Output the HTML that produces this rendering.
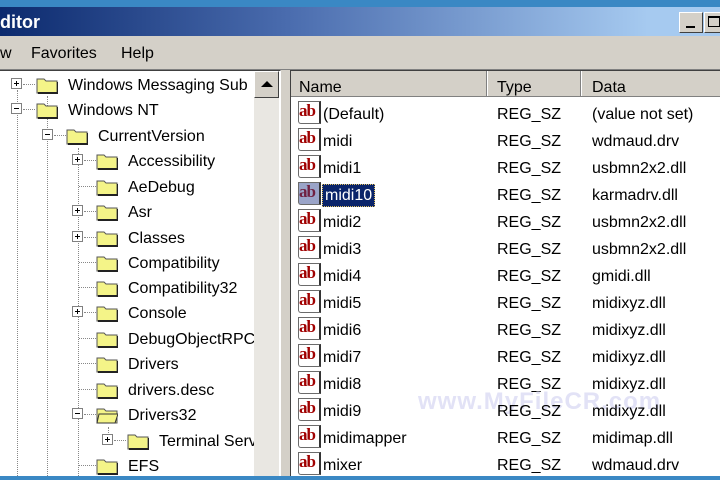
<!DOCTYPE html>
<html><head><style>
*{margin:0;padding:0;box-sizing:border-box}
body{width:720px;height:480px;overflow:hidden;background:#d4d0c8;font-family:"Liberation Sans",sans-serif;font-size:16px;color:#000;position:relative}
.a{position:absolute}
.tt{white-space:nowrap;line-height:20px;margin-top:2px}
.box{position:absolute;width:11px;height:11px;border:1px solid #808080;background:#fff}
.box:before{content:"";position:absolute;left:2px;top:4px;width:5px;height:1px;background:#000}
.box.p:after{content:"";position:absolute;left:4px;top:2px;width:1px;height:5px;background:#000}
.hd{position:absolute;border-top:1px dotted #888;height:0}
.vd{position:absolute;border-left:1px dotted #888;width:0}
.fd{position:absolute;width:22px;height:19px}
.ic{position:absolute;width:23px;height:23px;border:1px solid #6b6b6b;border-right:2px solid #333;background:#fff;border-radius:0 0 0 3px}
.ic span{position:absolute;left:0px;top:1px;font-family:"Liberation Serif",serif;font-weight:bold;font-size:17px;color:#a00000;line-height:16px;letter-spacing:-1px}
</style></head><body>
<div class="a" style="left:0;top:0;width:720px;height:7px;background:#3a88c4"></div>
<div class="a" style="left:0;top:7px;width:720px;height:29px;background:linear-gradient(90deg,#0c2a6e 0%,#4a6cae 40%,#a6caf0 90%,#a6caf0 100%)"></div>
<div class="a tt" style="left:0;top:10px;color:#fff;font-weight:bold;font-size:18px">ditor</div>
<div class="a" style="left:679px;top:12px;width:24px;height:21px;background:#d4d0c8;border:1px solid;border-color:#fff #404040 #404040 #fff"><div class="a" style="left:6px;top:13px;width:9px;height:2px;background:#000"></div></div>
<div class="a" style="left:704px;top:12px;width:20px;height:21px;background:#d4d0c8;border:1px solid;border-color:#fff #404040 #404040 #fff"><div class="a" style="left:3px;top:3px;width:12px;height:11px;border:1px solid #000;border-top-width:2px"></div></div>
<div class="a tt" style="left:0;top:42px">w</div>
<div class="a tt" style="left:31px;top:42px">Favorites</div>
<div class="a tt" style="left:121px;top:42px">Help</div>
<div class="a" style="left:0;top:69px;width:720px;height:1px;background:#808080"></div>
<div class="a" style="left:0;top:70px;width:281px;height:410px;background:#fff;border-top:1px solid #404040;border-right:1px solid #fff;overflow:hidden">
<div class="a" style="left:254px;top:0;width:25px;height:410px;background-color:#f0efeb;background-image:radial-gradient(#d4d0c8 0.7px,transparent 0.7px);background-size:2px 2px"></div>
<div class="a" style="left:254px;top:0;width:25px;height:27px;background:#d4d0c8;border:1px solid;border-color:#fff #404040 #404040 #fff"><div class="a" style="left:6px;top:9px;width:0;height:0;border-left:6px solid transparent;border-right:6px solid transparent;border-bottom:6px solid #000"></div></div>
</div>
<div class="a" style="left:281px;top:70px;width:9px;height:410px;background:#d4d0c8"></div>
<div class="vd" style="left:17px;top:90px;height:390px"></div>
<div class="vd" style="left:47px;top:96px;height:384px"></div>
<div class="vd" style="left:78px;top:148px;height:332px"></div>
<div class="vd" style="left:108px;top:427px;height:12px"></div>
<div class="a" style="left:290px;top:70px;width:430px;height:410px;background:#fff;border-top:1px solid #404040;border-left:1px solid #404040"></div>
<div class="a" style="left:291px;top:71px;width:429px;height:26px;background:#d4d0c8;border-bottom:1px solid #808080"></div>
<div class="a" style="left:486px;top:71px;width:1px;height:25px;background:#808080"></div><div class="a" style="left:487px;top:71px;width:1px;height:25px;background:#fff"></div>
<div class="a" style="left:580px;top:71px;width:1px;height:25px;background:#808080"></div><div class="a" style="left:581px;top:71px;width:1px;height:25px;background:#fff"></div>
<div class="a tt" style="left:299px;top:76px">Name</div>
<div class="a tt" style="left:497px;top:76px">Type</div>
<div class="a tt" style="left:592px;top:76px">Data</div>

<div class="box p" style="left:11px;top:78px"></div><div class="hd" style="left:23px;top:84px;width:12px"></div>
<svg class="fd" style="left:36px;top:75px"><path d="M1 4h7l2 2h11v12H1z" fill="#f4f488" stroke="#555"/><path d="M2 18h20V7" fill="none" stroke="#222" stroke-width="2"/></svg>
<div class="a tt" style="left:68px;top:74px">Windows Messaging Sub</div>

<div class="box" style="left:11px;top:103px"></div><div class="hd" style="left:23px;top:109px;width:12px"></div>
<svg class="fd" style="left:36px;top:100px"><path d="M1 4h7l2 2h11v12H1z" fill="#f4f488" stroke="#555"/><path d="M2 18h20V7" fill="none" stroke="#222" stroke-width="2"/></svg>
<div class="a tt" style="left:68px;top:99px">Windows NT</div>

<div class="box" style="left:42px;top:129px"></div><div class="hd" style="left:54px;top:135px;width:12px"></div>
<svg class="fd" style="left:66px;top:126px"><path d="M1 4h7l2 2h11v12H1z" fill="#f4f488" stroke="#555"/><path d="M2 18h20V7" fill="none" stroke="#222" stroke-width="2"/></svg>
<div class="a tt" style="left:98px;top:125px">CurrentVersion</div>

<div class="box p" style="left:72px;top:154px"></div><div class="hd" style="left:84px;top:160px;width:12px"></div>
<svg class="fd" style="left:96px;top:151px"><path d="M1 4h7l2 2h11v12H1z" fill="#f4f488" stroke="#555"/><path d="M2 18h20V7" fill="none" stroke="#222" stroke-width="2"/></svg>
<div class="a tt" style="left:128px;top:150px">Accessibility</div>

<div class="hd" style="left:79px;top:186px;width:17px"></div>
<svg class="fd" style="left:96px;top:177px"><path d="M1 4h7l2 2h11v12H1z" fill="#f4f488" stroke="#555"/><path d="M2 18h20V7" fill="none" stroke="#222" stroke-width="2"/></svg>
<div class="a tt" style="left:128px;top:176px">AeDebug</div>

<div class="box p" style="left:72px;top:205px"></div><div class="hd" style="left:84px;top:211px;width:12px"></div>
<svg class="fd" style="left:96px;top:202px"><path d="M1 4h7l2 2h11v12H1z" fill="#f4f488" stroke="#555"/><path d="M2 18h20V7" fill="none" stroke="#222" stroke-width="2"/></svg>
<div class="a tt" style="left:128px;top:201px">Asr</div>

<div class="box p" style="left:72px;top:231px"></div><div class="hd" style="left:84px;top:237px;width:12px"></div>
<svg class="fd" style="left:96px;top:228px"><path d="M1 4h7l2 2h11v12H1z" fill="#f4f488" stroke="#555"/><path d="M2 18h20V7" fill="none" stroke="#222" stroke-width="2"/></svg>
<div class="a tt" style="left:128px;top:227px">Classes</div>

<div class="hd" style="left:79px;top:262px;width:17px"></div>
<svg class="fd" style="left:96px;top:253px"><path d="M1 4h7l2 2h11v12H1z" fill="#f4f488" stroke="#555"/><path d="M2 18h20V7" fill="none" stroke="#222" stroke-width="2"/></svg>
<div class="a tt" style="left:128px;top:252px">Compatibility</div>

<div class="hd" style="left:79px;top:287px;width:17px"></div>
<svg class="fd" style="left:96px;top:278px"><path d="M1 4h7l2 2h11v12H1z" fill="#f4f488" stroke="#555"/><path d="M2 18h20V7" fill="none" stroke="#222" stroke-width="2"/></svg>
<div class="a tt" style="left:128px;top:277px">Compatibility32</div>

<div class="box p" style="left:72px;top:306px"></div><div class="hd" style="left:84px;top:312px;width:12px"></div>
<svg class="fd" style="left:96px;top:303px"><path d="M1 4h7l2 2h11v12H1z" fill="#f4f488" stroke="#555"/><path d="M2 18h20V7" fill="none" stroke="#222" stroke-width="2"/></svg>
<div class="a tt" style="left:128px;top:302px">Console</div>

<div class="hd" style="left:79px;top:338px;width:17px"></div>
<svg class="fd" style="left:96px;top:329px"><path d="M1 4h7l2 2h11v12H1z" fill="#f4f488" stroke="#555"/><path d="M2 18h20V7" fill="none" stroke="#222" stroke-width="2"/></svg>
<div class="a tt" style="left:128px;top:328px;width:126px;overflow:hidden">DebugObjectRPC</div>

<div class="hd" style="left:79px;top:363px;width:17px"></div>
<svg class="fd" style="left:96px;top:354px"><path d="M1 4h7l2 2h11v12H1z" fill="#f4f488" stroke="#555"/><path d="M2 18h20V7" fill="none" stroke="#222" stroke-width="2"/></svg>
<div class="a tt" style="left:128px;top:353px">Drivers</div>

<div class="hd" style="left:79px;top:389px;width:17px"></div>
<svg class="fd" style="left:96px;top:380px"><path d="M1 4h7l2 2h11v12H1z" fill="#f4f488" stroke="#555"/><path d="M2 18h20V7" fill="none" stroke="#222" stroke-width="2"/></svg>
<div class="a tt" style="left:128px;top:379px">drivers.desc</div>

<div class="box" style="left:72px;top:408px"></div><div class="hd" style="left:84px;top:414px;width:12px"></div>
<svg class="fd" style="left:96px;top:405px"><path d="M1 4h7l2 2h11v12H1z" fill="#f4f488" stroke="#555"/><path d="M3 9h19l-3 9H1z" fill="#f4f488" stroke="#333"/></svg>
<div class="a tt" style="left:128px;top:404px">Drivers32</div>

<div class="box p" style="left:102px;top:434px"></div><div class="hd" style="left:114px;top:440px;width:12px"></div>
<svg class="fd" style="left:127px;top:431px"><path d="M1 4h7l2 2h11v12H1z" fill="#f4f488" stroke="#555"/><path d="M2 18h20V7" fill="none" stroke="#222" stroke-width="2"/></svg>
<div class="a tt" style="left:159px;top:430px;width:95px;overflow:hidden">Terminal Server</div>

<div class="hd" style="left:79px;top:465px;width:17px"></div>
<svg class="fd" style="left:96px;top:456px"><path d="M1 4h7l2 2h11v12H1z" fill="#f4f488" stroke="#555"/><path d="M2 18h20V7" fill="none" stroke="#222" stroke-width="2"/></svg>
<div class="a tt" style="left:128px;top:455px">EFS</div>

<div class="ic" style="left:298px;top:101px"><span>ab</span></div><div class="a tt" style="left:323px;top:103px">(Default)</div><div class="a tt" style="left:497px;top:103px">REG_SZ</div><div class="a tt" style="left:592px;top:103px">(value not set)</div>
<div class="ic" style="left:298px;top:128px"><span>ab</span></div><div class="a tt" style="left:323px;top:130px">midi</div><div class="a tt" style="left:497px;top:130px">REG_SZ</div><div class="a tt" style="left:592px;top:130px">wdmaud.drv</div>
<div class="ic" style="left:298px;top:155px"><span>ab</span></div><div class="a tt" style="left:323px;top:157px">midi1</div><div class="a tt" style="left:497px;top:157px">REG_SZ</div><div class="a tt" style="left:592px;top:157px">usbmn2x2.dll</div>
<div class="ic" style="left:298px;top:182px;background:#9aa4c8"><span style="color:#702040">ab</span></div><div class="a tt" style="left:322px;top:182px;height:23px;padding:1px 2px;background:#0a246a;color:#fff;border:1px dotted #e0c060">midi10</div><div class="a tt" style="left:497px;top:184px">REG_SZ</div><div class="a tt" style="left:592px;top:184px">karmadrv.dll</div>
<div class="ic" style="left:298px;top:209px"><span>ab</span></div><div class="a tt" style="left:323px;top:211px">midi2</div><div class="a tt" style="left:497px;top:211px">REG_SZ</div><div class="a tt" style="left:592px;top:211px">usbmn2x2.dll</div>
<div class="ic" style="left:298px;top:236px"><span>ab</span></div><div class="a tt" style="left:323px;top:238px">midi3</div><div class="a tt" style="left:497px;top:238px">REG_SZ</div><div class="a tt" style="left:592px;top:238px">usbmn2x2.dll</div>
<div class="ic" style="left:298px;top:263px"><span>ab</span></div><div class="a tt" style="left:323px;top:265px">midi4</div><div class="a tt" style="left:497px;top:265px">REG_SZ</div><div class="a tt" style="left:592px;top:265px">gmidi.dll</div>
<div class="ic" style="left:298px;top:290px"><span>ab</span></div><div class="a tt" style="left:323px;top:292px">midi5</div><div class="a tt" style="left:497px;top:292px">REG_SZ</div><div class="a tt" style="left:592px;top:292px">midixyz.dll</div>
<div class="ic" style="left:298px;top:317px"><span>ab</span></div><div class="a tt" style="left:323px;top:319px">midi6</div><div class="a tt" style="left:497px;top:319px">REG_SZ</div><div class="a tt" style="left:592px;top:319px">midixyz.dll</div>
<div class="ic" style="left:298px;top:344px"><span>ab</span></div><div class="a tt" style="left:323px;top:346px">midi7</div><div class="a tt" style="left:497px;top:346px">REG_SZ</div><div class="a tt" style="left:592px;top:346px">midixyz.dll</div>
<div class="ic" style="left:298px;top:371px"><span>ab</span></div><div class="a tt" style="left:323px;top:373px">midi8</div><div class="a tt" style="left:497px;top:373px">REG_SZ</div><div class="a tt" style="left:592px;top:373px">midixyz.dll</div>
<div class="a tt" style="left:418px;top:390px;font-size:24px;font-weight:bold;color:#e2e2f6;letter-spacing:1px">www.MyFileCR.com</div>
<div class="ic" style="left:298px;top:398px"><span>ab</span></div><div class="a tt" style="left:323px;top:400px">midi9</div><div class="a tt" style="left:497px;top:400px">REG_SZ</div><div class="a tt" style="left:592px;top:400px">midixyz.dll</div>
<div class="ic" style="left:298px;top:425px"><span>ab</span></div><div class="a tt" style="left:323px;top:427px">midimapper</div><div class="a tt" style="left:497px;top:427px">REG_SZ</div><div class="a tt" style="left:592px;top:427px">midimap.dll</div>
<div class="ic" style="left:298px;top:452px"><span>ab</span></div><div class="a tt" style="left:323px;top:454px">mixer</div><div class="a tt" style="left:497px;top:454px">REG_SZ</div><div class="a tt" style="left:592px;top:454px">wdmaud.drv</div>
<div class="a" style="left:0;top:476px;width:720px;height:4px;background:#3a88c4"></div>
</body></html>
